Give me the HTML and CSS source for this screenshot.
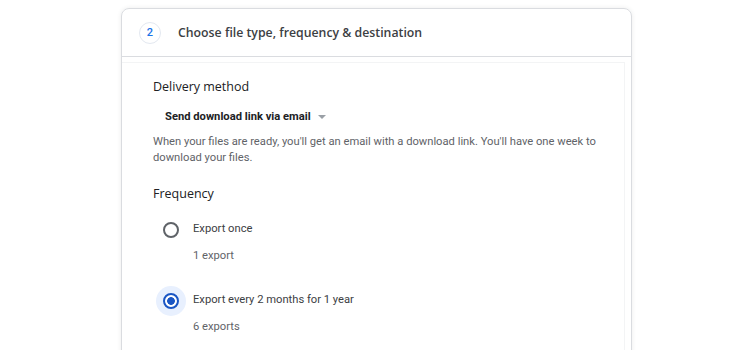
FILE: index.html
```html
<!DOCTYPE html>
<html lang="en">
  <head>
    <meta charset="utf-8" />
    <link rel="stylesheet" href="styles.css">
  </head>
  <body>
    <main class="card">
      <header class="step-head">
        <span class="step-num">2</span>
        <h2>Choose file type, frequency &amp; destination</h2>
      </header>
      <section class="step-body">
        <h3>Delivery method</h3>
        <div class="dropdown">Send download link via email <span class="caret"></span></div>
        <p class="hint">When your files are ready, you'll get an email with a download link. You'll have one week to download your files.</p>

        <h3 class="freq">Frequency</h3>
        <div class="option">
          <span class="radio"></span>
          <div>
            <div class="opt-label">Export once</div>
            <div class="opt-sub">1 export</div>
          </div>
        </div>
        <div class="option">
          <span class="radio checked"></span>
          <div>
            <div class="opt-label">Export every 2 months for 1 year</div>
            <div class="opt-sub">6 exports</div>
          </div>
        </div>
      </section>
    </main>
  </body>
</html>
```

FILE: styles.css
```css
body {
  margin: 0;
  background: #fff;
  font-family: Roboto, "Liberation Sans", sans-serif;
  color: #3c4043;
}

.card {
  width: 509px;
  margin: 8px 0 0 121px;
  height: 400px;
  border: 1px solid #dadce0;
  border-radius: 8px;
  box-shadow: 0 0 4px rgba(60, 64, 67, 0.1);
}

.step-head {
  height: 47px;
  display: flex;
  align-items: center;
  padding-left: 17px;
  border-bottom: 1px solid #dadce0;
}

.step-num {
  width: 20px;
  height: 20px;
  border: 1px solid #e3e8f0;
  border-radius: 50%;
  display: flex;
  align-items: center;
  justify-content: center;
  font-size: 11px;
  font-weight: 500;
  color: #1a73e8;
}

.step-head h2 {
  margin: 0 0 0 17px;
  font-family: "Open Sans", sans-serif;
  font-size: 12.3px;
  font-weight: 600;
  color: #3c4043;
}

.step-body {
  margin: 5px 6px 0 0;
  padding: 14px 20px 0 31px;
  border-top: 1px solid #f3f4f5;
  border-right: 1px solid #f3f4f5;
  height: 340px;
}

h3 {
  margin: 0;
  font-family: "Open Sans", sans-serif;
  font-size: 12.5px;
  font-weight: 500;
  color: #202124;
  line-height: 20px;
}

.dropdown {
  margin: 11px 0 0 12px;
  font-size: 11.2px;
  font-weight: 700;
  color: #202124;
  display: flex;
  align-items: center;
  line-height: 18px;
}

.caret {
  margin-left: 7px;
  width: 0;
  height: 0;
  border-left: 4px solid transparent;
  border-right: 4px solid transparent;
  border-top: 4px solid #9aa0a6;
}

.hint {
  margin: 8px 0 0;
  font-size: 11.2px;
  line-height: 16px;
  color: #5f6368;
}

.freq {
  margin-top: 18px;
}

.option {
  display: flex;
  align-items: flex-start;
  margin: 17px 0 0 3px;
}

.option + .option {
  margin-top: 28px;
}

.radio {
  width: 30px;
  height: 30px;
  margin-top: -6px;
  border-radius: 50%;
  display: flex;
  align-items: center;
  justify-content: center;
  flex-shrink: 0;
}

.radio::before {
  content: "";
  width: 12px;
  height: 12px;
  border: 2px solid #5f6368;
  border-radius: 50%;
}

.radio.checked {
  background: #e8f0fe;
}

.radio.checked::before {
  border-color: #1a56c4;
  background: radial-gradient(circle, #1a56c4 0 3.5px, #fff 4.2px);
}

.opt-label {
  margin-left: 7px;
  font-size: 11.2px;
  line-height: 16px;
  color: #3c4043;
}

.opt-sub {
  margin: 11px 0 0 7px;
  font-size: 11.2px;
  line-height: 16px;
  color: #5f6368;
}
```
